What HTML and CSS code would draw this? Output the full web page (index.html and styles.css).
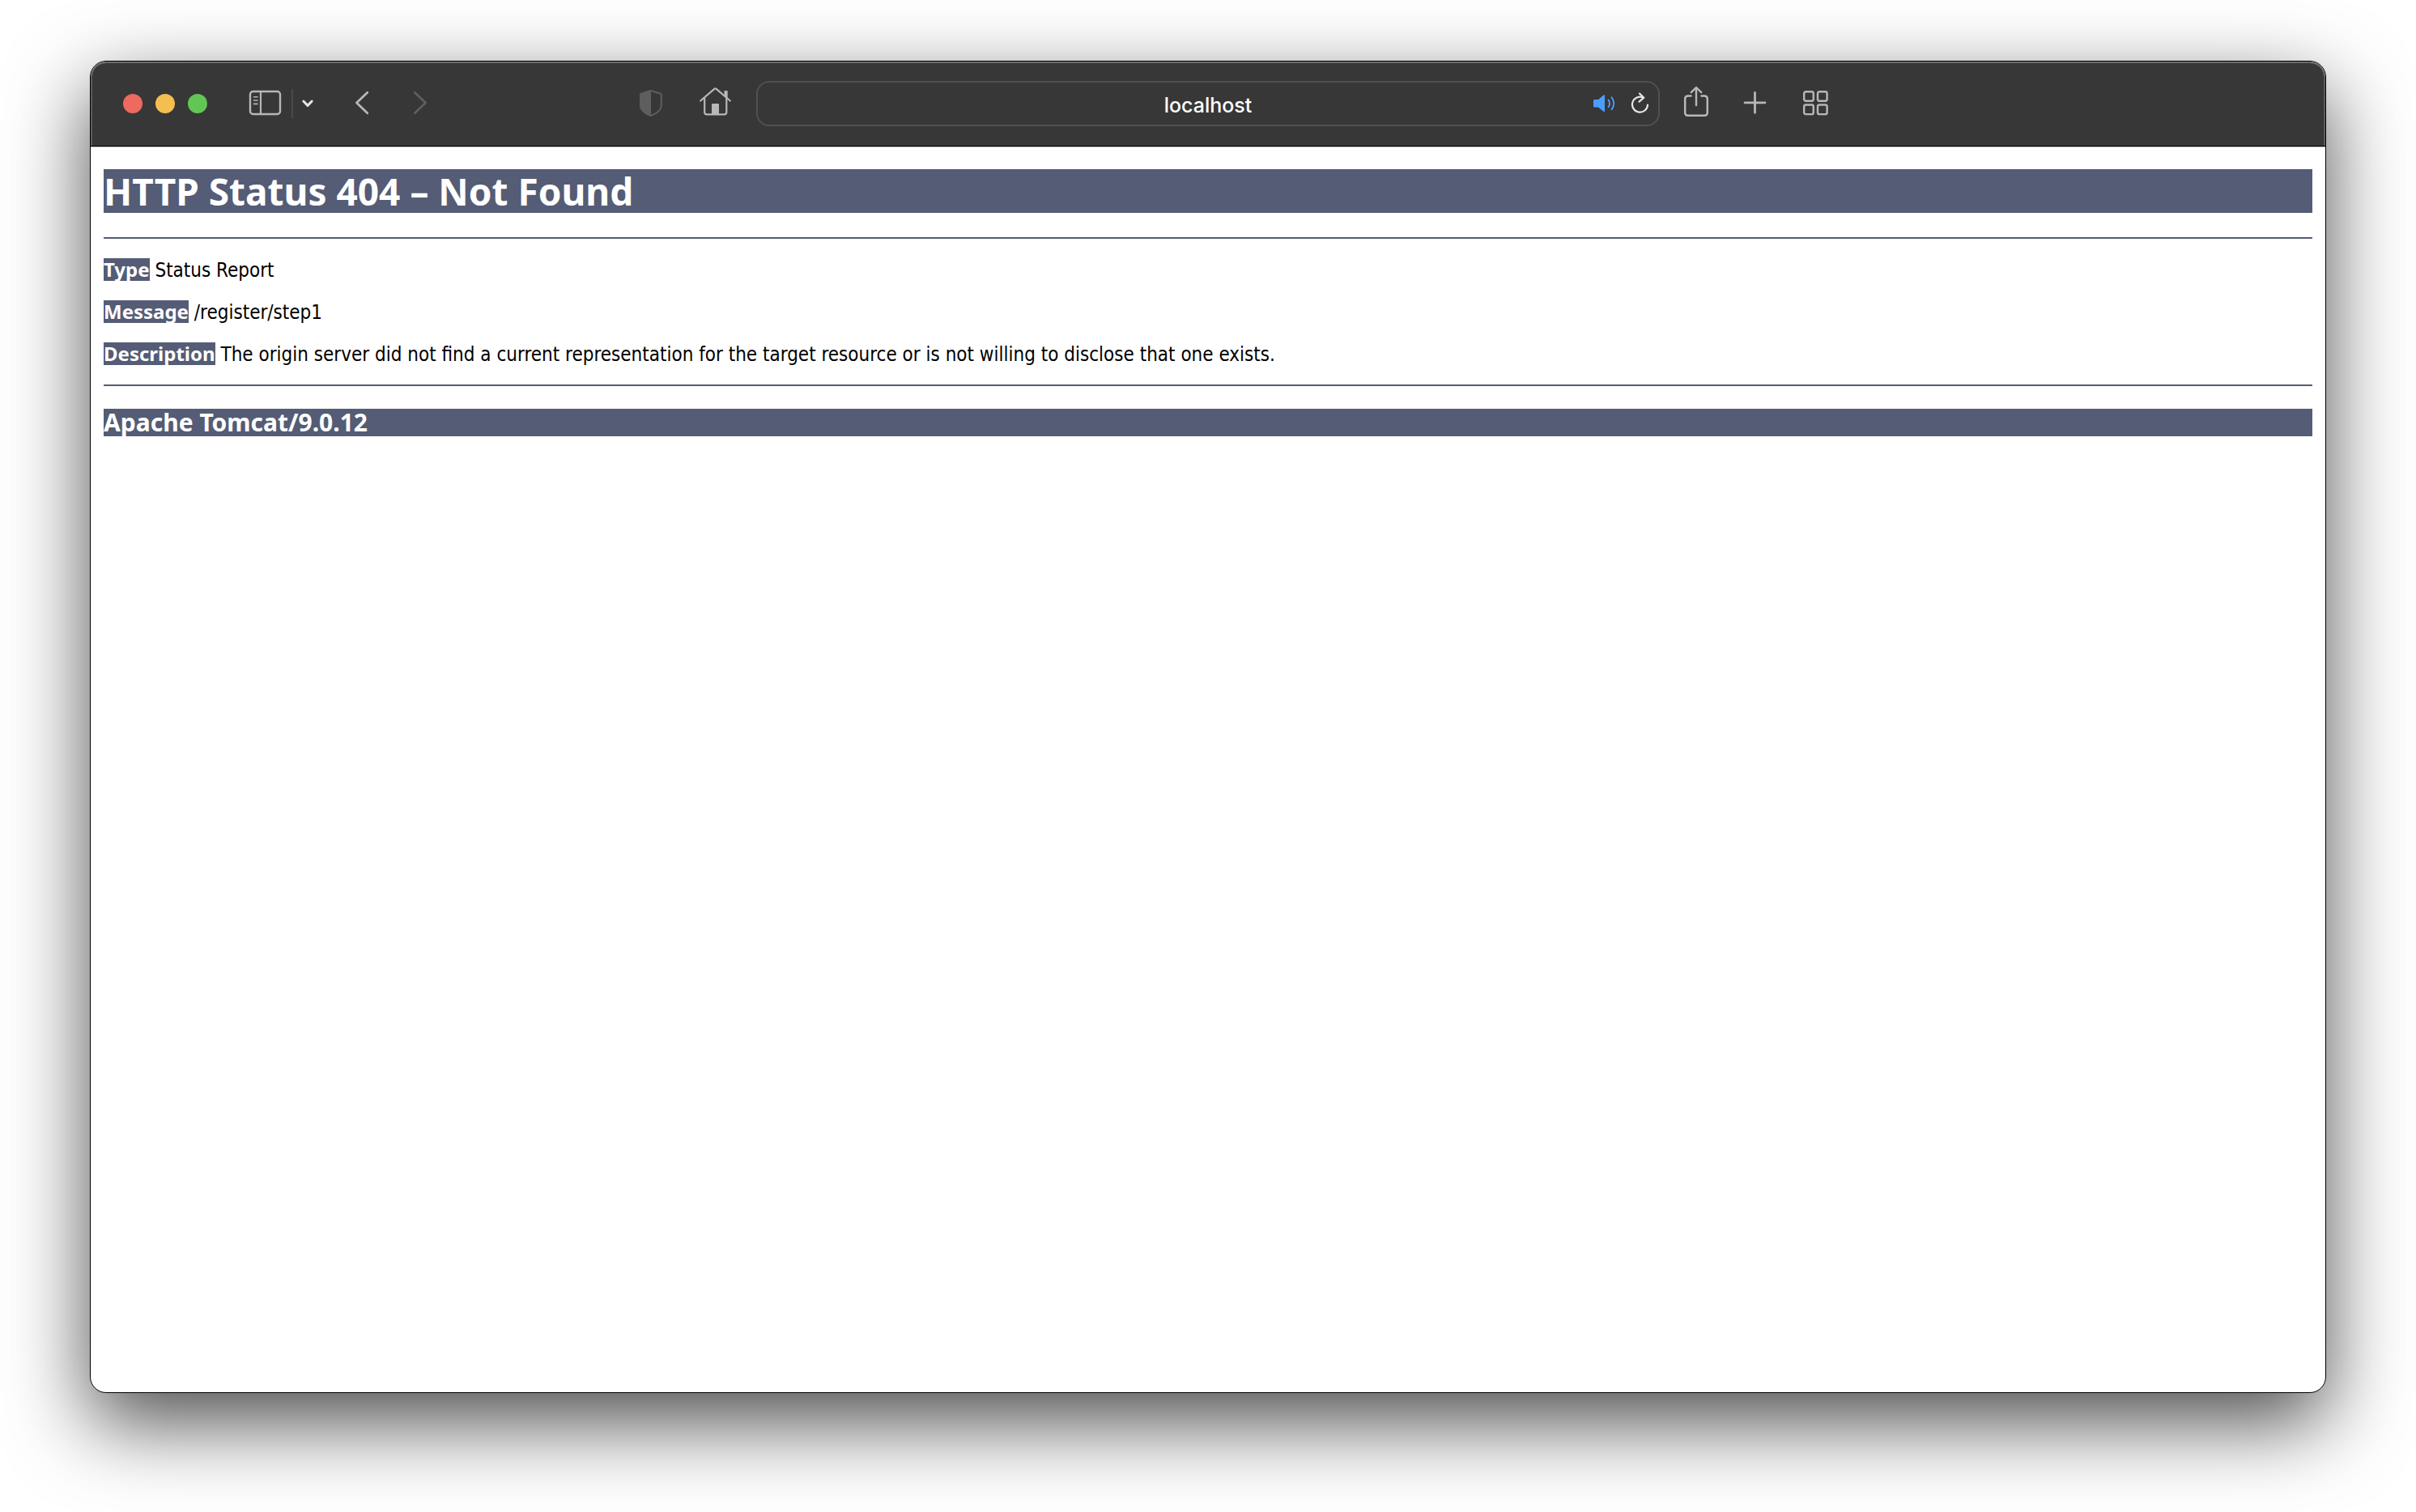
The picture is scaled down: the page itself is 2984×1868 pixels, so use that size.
FILE: index.html
```html
<!DOCTYPE html>
<html lang="en">
<head>
  <meta charset="UTF-8" />
  <title>HTTP Status 404 – Not Found</title>
  <link rel="stylesheet" href="styles.css">
</head>
<body>
  <div class="window">
    <header class="toolbar">
      <div class="tools tools-left">
        <div class="lights">
          <button class="light close" aria-label="Close"></button>
          <button class="light minimize" aria-label="Minimize"></button>
          <button class="light maximize" aria-label="Zoom"></button>
        </div>
        <div class="sidebar-group">
          <button class="tool" aria-label="Sidebar">
            <svg width="44" height="44" viewBox="0 0 44 44">
              <rect x="3" y="7" width="37" height="28" rx="3.5" stroke-width="2.4"/>
              <path d="M16 7v28" stroke-width="2.2"/>
              <path d="M7.5 13.7h4.5M7.5 18h4.5M7.5 22.4h4.5" stroke-width="1.6"/>
            </svg>
          </button>
          <span class="divider"></span>
          <button class="tool bright" aria-label="Tab groups">
            <svg width="16" height="44" viewBox="0 0 16 44"><path d="M2.8 19l5.2 5.4 5.2-5.4" stroke-width="3"/></svg>
          </button>
        </div>
        <div class="history">
          <button class="tool" aria-label="Back">
            <svg width="44" height="44" viewBox="0 0 44 44"><path d="M28.8 8.3L15.5 21l13.3 12.7" stroke-width="2.8"/></svg>
          </button>
          <button class="tool dim" aria-label="Forward" disabled>
            <svg width="44" height="44" viewBox="0 0 44 44"><path d="M15.3 8.3L28.6 21 15.3 33.7" stroke-width="2.8"/></svg>
          </button>
        </div>
        <div class="page-tools">
          <button class="tool dim" aria-label="Privacy report">
            <svg width="44" height="44" viewBox="0 0 44 44">
              <path d="M21.7 6L34 9.8Q34.8 10.2 34.8 11V24.5Q34.8 32 21.7 37Q9 32 9 24.5V11Q9 10.2 9.8 9.8Z" stroke-width="2"/>
              <path class="fill" d="M22 5L9 9.5Q8 10 8 11V24.5Q8 32.5 22 38Z"/>
            </svg>
          </button>
          <button class="tool" aria-label="Home">
            <svg width="44" height="44" viewBox="0 0 44 44">
              <path d="M3.2 18.5L20.3 3.9Q21.5 3 22.7 3.9L39.8 18.5" stroke-width="2.2"/>
              <path d="M8.2 15v17.5q0 2.8 2.8 2.8h21.5q2.8 0 2.8-2.8V15" stroke-width="2.2"/>
              <path class="fill" d="M32.5 12.5V6.8q0-.8.8-.8h2.6q.8 0 .8.8v9.5z"/>
              <path class="fill" d="M17 36V23q0-1 1-1h7q1 0 1 1v13z"/>
            </svg>
          </button>
        </div>
      </div>

      <div class="address">
        <input class="url" type="text" value="localhost" aria-label="Address">
        <button class="tool sound" aria-label="Mute">
          <svg width="44" height="44" viewBox="0 0 44 44">
            <path class="fill" d="M8 18.5q0-1.5 1.5-1.5H14l6.5-5.5q1.5-1 1.5.8V31q0 1.8-1.5.8L14 26.5H9.5q-1.5 0-1.5-1.5z"/>
            <path d="M26.6 17.6q3 4.2 0 8.6M30.6 14.3q5.2 7.5 0 15" stroke-width="1.9"/>
          </svg>
        </button>
        <button class="tool bright" aria-label="Reload">
          <svg width="44" height="44" viewBox="0 0 44 44">
            <path d="M25.5 14.5A9.5 9.5 0 1 0 31 23.5" stroke-width="2.2"/>
            <path d="M21 9.5l5.3 5.2-5.8 5" stroke-width="2.2"/>
          </svg>
        </button>
      </div>

      <div class="tools tools-right">
        <button class="tool" aria-label="Share">
          <svg width="44" height="44" viewBox="0 0 44 44">
            <path d="M15.5 12.5H12q-3.8 0-3.8 3.8v17q0 3.5 3.8 3.5h20q3.8 0 3.8-3.5v-17q0-3.8-3.8-3.8h-3.5" stroke-width="2.5"/>
            <path d="M22 24V3M15.8 8.2L22 2l6.2 6.2" stroke-width="2.4"/>
          </svg>
        </button>
        <button class="tool" aria-label="New tab">
          <svg width="44" height="44" viewBox="0 0 44 44"><path d="M20.5 8.3v25M8 20.8h25" stroke-width="2.8"/></svg>
        </button>
        <button class="tool" aria-label="Tab overview">
          <svg width="44" height="44" viewBox="0 0 44 44" stroke-width="2.4">
            <rect x="7.2" y="7.2" width="11.6" height="11.6" rx="2.2"/>
            <rect x="24" y="7.2" width="11.6" height="11.6" rx="2.2"/>
            <rect x="7.2" y="23.5" width="11.6" height="11.6" rx="2.2"/>
            <rect x="24" y="23.5" width="11.6" height="11.6" rx="2.2"/>
          </svg>
        </button>
      </div>
    </header>

    <main class="page">
      <h1>HTTP Status 404 – Not Found</h1>
      <hr>
      <p><b>Type</b> Status Report</p>
      <p><b>Message</b> /register/step1</p>
      <p><b>Description</b> The origin server did not find a current representation for the target resource or is not willing to disclose that one exists.</p>
      <hr>
      <h3>Apache Tomcat/9.0.12</h3>
    </main>
  </div>
</body>
</html>
```
FILE: styles.css
```css
* { box-sizing: border-box; }
body { margin: 0; min-height: 100vh; padding: 75px 111px 147px; display: flex; background: #fff; }

.window { flex: 1; min-width: 0; border: 1px solid #000; border-radius: 20px; overflow: hidden; background: #fff; box-shadow: 0 36px 100px rgba(0,0,0,0.7); }

/* browser toolbar */
.toolbar { display: grid; grid-template-columns: 1fr minmax(0, 1116px) 1fr; align-items: center; padding: 24px 0; background: #373737; border-bottom: 1px solid #000; border-radius: 20px 20px 0 0; box-shadow: inset 0 2px #6c6c6c, inset 2px 0 #5c5c5c, inset -2px 0 #5c5c5c, 0 1px #b4b4b4; }
.tools, .lights, .sidebar-group, .history, .page-tools { display: flex; align-items: center; }
.tools-left { padding: 0 28px 0 40px; }
.tools-right { gap: 30px; padding-left: 23px; }

.lights { gap: 16px; margin-right: 50px; }
.light { width: 24px; height: 24px; padding: 0; border: 0; border-radius: 50%; }
.close { background: #ed6a5f; }
.minimize { background: #f5bf4f; }
.maximize { background: #62c655; }

.sidebar-group { gap: 10px; margin-right: 37px; }
.divider { width: 2px; height: 36px; background: #4a4a4a; }
.history { gap: 28px; }
.page-tools { gap: 36px; margin-left: auto; }

.tool { display: block; padding: 0; border: 0; background: none; color: #b7b7b7; }
.tool svg { display: block; fill: none; stroke: currentColor; stroke-linecap: round; stroke-linejoin: round; }
.tool .fill { fill: currentColor; stroke: none; }
.bright { color: #e6e6e6; }
.dim { color: #5e5e5e; }
.sound { color: #4c9df8; }

.address { display: flex; align-items: center; height: 56px; border: 2px solid #505050; border-radius: 16px; }
.url { flex: 1; min-width: 0; height: 100%; padding: 3px 0 0 88px; border: 0; outline: 0; background: none; color: #fff; font: 500 25px Inter, sans-serif; text-align: center; }

/* error page */
.page { padding: 28px 16px; color: #000; }
h1, h3, b { background: #555c75; color: #fff; font-family: Tahoma, "Noto Sans", sans-serif; }
h1 { margin: 0 0 30px; font-size: 46px; line-height: 54px; }
h3 { margin: 28px 0 0; font-size: 30px; line-height: 34px; }
p { margin: 24px 0; font-family: Tahoma, "DejaVu Sans Condensed", sans-serif; font-size: 24px; line-height: 26px; }
b { display: inline-block; line-height: 28px; }
hr { height: 2px; margin: 0; border: 0; background: #535d73; }
```
